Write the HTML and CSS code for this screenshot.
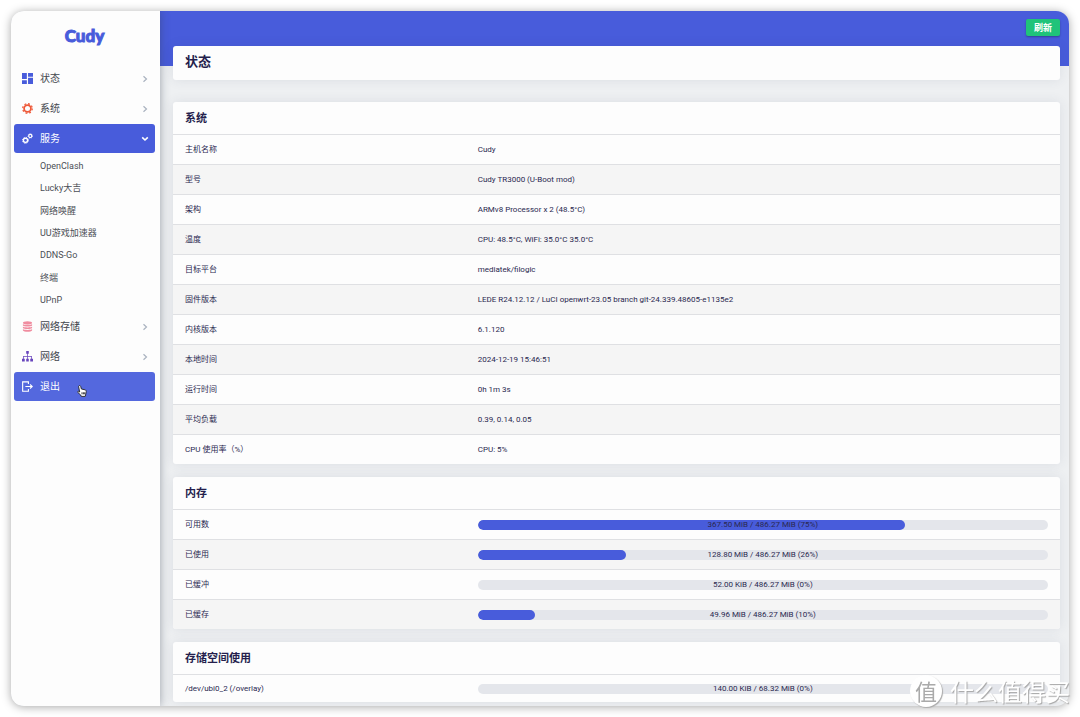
FILE: index.html
```html
<!DOCTYPE html>
<html lang="zh-CN">
<head>
<meta charset="utf-8">
<meta name="viewport" content="width=device-width, initial-scale=1">
<title>Cudy - 状态</title>
<link rel="stylesheet" href="styles.css">
</head>
<body>
<div class="window">
  <aside class="sidebar">
    <a class="brand" href="#">Cudy</a>
    <nav>
      <ul class="menu">
        <li><a class="menu-link" href="#">
          <svg class="icon blue" viewBox="0 0 12 12"><path d="M0 0h5.3v6.6H0zM6.6 0H12v4H6.600zM0 7.800h5.300V12H0zM6.600 5.300H12V12H6.600z"/></svg>
          <span>状态</span>
          <svg class="chevron" viewBox="0 0 8 8"><path d="M2.500 1.200 5.500 4 2.500 6.800"/></svg></a></li>
        <li><a class="menu-link" href="#">
          <svg class="icon red line" viewBox="0 0 12 12"><circle cx="6" cy="6" r="3.700" stroke-width="1.900"/><circle cx="6" cy="6" r="5.200" stroke-width="1.400" stroke-dasharray="2.040 2.040"/></svg>
          <span>系统</span>
          <svg class="chevron" viewBox="0 0 8 8"><path d="M2.500 1.200 5.500 4 2.500 6.800"/></svg></a></li>
        <li><a class="menu-link active" href="#">
          <svg class="icon line" viewBox="0 0 12 12"><circle cx="3.800" cy="8" r="2.300" stroke-width="1.500"/><circle cx="3.800" cy="8" r="3.300" stroke-width="1" stroke-dasharray="1.300 1.290"/><circle cx="9" cy="3.200" r="1.700" stroke-width="1.300"/><circle cx="9" cy="3.200" r="2.500" stroke-width=".8" stroke-dasharray=".98 .98"/></svg>
          <span>服务</span>
          <svg class="chevron" viewBox="0 0 8 8"><path d="M1.200 2.300 4 5 6.800 2.300"/></svg></a>
          <ul class="submenu">
            <li><a href="#">OpenClash</a></li>
            <li><a href="#">Lucky大吉</a></li>
            <li><a href="#">网络唤醒</a></li>
            <li><a href="#">UU游戏加速器</a></li>
            <li><a href="#">DDNS-Go</a></li>
            <li><a href="#">终端</a></li>
            <li><a href="#">UPnP</a></li>
          </ul></li>
        <li><a class="menu-link" href="#">
          <svg class="icon pink" viewBox="0 0 12 12"><ellipse cx="6" cy="2" rx="5" ry="1.700"/><path d="M1 3.200c1 1.300 9 1.300 10 0v1.700c-1 1.500-9 1.500-10 0zM1 6c1 1.300 9 1.300 10 0v1.700c-1 1.500-9 1.500-10 0zM1 8.800c1 1.300 9 1.300 10 0v1.500c-1 1.900-9 1.900-10 0z"/></svg>
          <span>网络存储</span>
          <svg class="chevron" viewBox="0 0 8 8"><path d="M2.500 1.200 5.500 4 2.500 6.800"/></svg></a></li>
        <li><a class="menu-link" href="#">
          <svg class="icon purple" viewBox="0 0 12 12"><path d="M4.600 0h2.800v3H6.400v2.400h4.400V8.500H12v3H9v-3h1V6.300H6.400v2.200h1v3H4.600v-3h1V6.300H2v2.200h1v3H0v-3h1.200V5.400h4.400V3h-1z"/></svg>
          <span>网络</span>
          <svg class="chevron" viewBox="0 0 8 8"><path d="M2.500 1.200 5.500 4 2.500 6.800"/></svg></a></li>
        <li><a class="menu-link hover" href="#">
          <svg class="icon line" viewBox="0 0 12 12"><path d="M7 3.200V.9H.7v10.300H7V8.800M3.700 6h7.500M8.800 3.800 11.200 6 8.800 8.200" stroke-width="1.200"/></svg>
          <span>退出</span>
          <svg class="cursor" viewBox="0 0 10 12"><path d="M2.200.7c.8-.5 1.300.1 1.500.8l.7 2.500 3.600.8c1 .3 1.400 1 1.200 2l-.6 3.200-.4 1.400H4.300L3.700 10 .9 7.500C.2 6.600 1.200 5.900 2 6.500l.7.500L1.600 1.700c-.1-.4.1-.8.600-1z"/><path d="M5 7.300v2M6.400 7.300v2M7.700 7.300v2"/></svg></a></li>
      </ul>
    </nav>
  </aside>

  <div class="main">
    <header class="topbar"><button class="refresh" type="button">刷新</button></header>
    <main class="content">
      <h1 class="card page-title">状态</h1>

      <section class="card">
        <h2>系统</h2>
        <table>
          <tr><th scope="row">主机名称</th><td>Cudy</td></tr>
          <tr><th scope="row">型号</th><td>Cudy TR3000 (U-Boot mod)</td></tr>
          <tr><th scope="row">架构</th><td>ARMv8 Processor x 2 (48.5°C)</td></tr>
          <tr><th scope="row">温度</th><td>CPU: 48.5°C, WiFi: 35.0°C 35.0°C</td></tr>
          <tr><th scope="row">目标平台</th><td>mediatek/filogic</td></tr>
          <tr><th scope="row">固件版本</th><td>LEDE R24.12.12 / LuCI openwrt-23.05 branch git-24.339.48605-e1135e2</td></tr>
          <tr><th scope="row">内核版本</th><td>6.1.120</td></tr>
          <tr><th scope="row">本地时间</th><td>2024-12-19 15:46:51</td></tr>
          <tr><th scope="row">运行时间</th><td>0h 1m 3s</td></tr>
          <tr><th scope="row">平均负载</th><td>0.39, 0.14, 0.05</td></tr>
          <tr><th scope="row">CPU 使用率（%）</th><td>CPU: 5%</td></tr>
        </table>
      </section>

      <section class="card">
        <h2>内存</h2>
        <table>
          <tr><th scope="row">可用数</th><td><div class="bar"><div class="fill" style="width:75%"></div><span>367.50 MiB / 486.27 MiB (75%)</span></div></td></tr>
          <tr><th scope="row">已使用</th><td><div class="bar"><div class="fill" style="width:26%"></div><span>128.80 MiB / 486.27 MiB (26%)</span></div></td></tr>
          <tr><th scope="row">已缓冲</th><td><div class="bar"><div class="fill" style="width:0%"></div><span>52.00 KiB / 486.27 MiB (0%)</span></div></td></tr>
          <tr><th scope="row">已缓存</th><td><div class="bar"><div class="fill" style="width:10%"></div><span>49.96 MiB / 486.27 MiB (10%)</span></div></td></tr>
        </table>
      </section>

      <section class="card">
        <h2>存储空间使用</h2>
        <table class="compact">
          <tr><th scope="row">/dev/ubi0_2 (/overlay)</th><td><div class="bar"><div class="fill" style="width:0%"></div><span>140.00 KiB / 68.32 MiB (0%)</span></div></td></tr>
        </table>
      </section>
    </main>
  </div>
</div>
<div class="watermark"><span class="seal">值</span><span>什么值得买</span></div>
</body>
</html>
```
FILE: styles.css
```css
* { box-sizing: border-box; }

body {
  margin: 0;
  padding: 11px;
  background: #fff;
  color: #2a2850;
  font: 8px/12px Roboto, "Noto Sans CJK SC", sans-serif;
}

ul { list-style: none; margin: 0; padding: 0; }
a { color: inherit; text-decoration: none; }

.window {
  display: flex;
  min-height: calc(100vh - 22px);
  border-radius: 13px;
  overflow: hidden;
  background: #eef0f2;
  box-shadow: 0 1px 10px rgba(0, 0, 0, .34);
}

/* Sidebar */
.sidebar {
  position: relative;
  z-index: 1;
  flex: 0 0 149px;
  background: #fdfdfd;
  box-shadow: 0 0 9px rgba(50, 60, 80, .45);
}

.brand {
  display: block;
  height: 53px;
  padding-top: 12px;
  padding-right: 2px;
  text-align: center;
  color: #485cdb;
  font: 900 17px/26px Lato, sans-serif;
  -webkit-text-stroke: 1px #485cdb;
  stroke-linejoin: round;
}

.menu {
  display: flex;
  flex-direction: column;
  gap: 1px;
  padding: 0 5px 0 3px;
}

.menu-link {
  position: relative;
  display: flex;
  align-items: center;
  height: 29px;
  padding: 0 6px 0 8px;
  border-radius: 3px;
  color: #43464d;
  font-size: 10px;
}
.menu-link span { flex: 1; padding-top: 1px; }
.menu-link.active { background: #485cdb; color: #fff; }
.menu-link.hover { background: #5468de; color: #fff; }

.icon { width: 11px; height: 11px; margin-right: 7px; fill: currentColor; }
.icon.line { fill: none; stroke: currentColor; }
.blue { color: #485cdb; }
.red { color: #ee5a3a; }
.pink { color: #f08da0; }
.purple { color: #6946bd; }

.chevron { width: 8px; height: 8px; fill: none; stroke: #a9b2bf; stroke-width: 1.2; }
.active .chevron { stroke: #fff; stroke-width: 1.6; }

.cursor {
  position: absolute;
  left: 63px;
  top: 13px;
  width: 10px;
  height: 12px;
  fill: #fff;
  stroke: #222;
  stroke-width: .9;
}

.submenu {
  display: grid;
  grid-auto-rows: 1fr;
  height: 158px;
  padding-top: 2px;
  font-size: 9px;
  color: #4b4e55;
}
.submenu a { display: flex; align-items: center; height: 100%; padding-left: 26px; }

/* Content */
.main { flex: 1; min-width: 0; }

.topbar {
  display: flex;
  justify-content: flex-end;
  align-items: flex-start;
  height: 55px;
  padding: 8px 9px;
  background: #485cdb;
}

.refresh {
  width: 34px;
  height: 17px;
  padding: 0;
  border: 0;
  border-radius: 2px;
  background: #20c37a;
  color: #fff;
  font: 700 9px/17px "Noto Sans CJK SC", sans-serif;
  box-shadow: 0 1px 2px rgba(0, 0, 0, .3);
}

.content { margin-top: -20px; padding: 0 9px 4px 13px; }

.card {
  margin: 0 0 13px;
  border-radius: 3px;
  overflow: hidden;
  background: #fdfdfd;
  box-shadow: 0 0 12px rgba(60, 65, 100, .1);
}
.card:last-child { margin-bottom: 0; }

.page-title {
  margin-bottom: 22px;
  padding: 0 12px 2px;
  font-size: 13px;
  line-height: 32px;
  color: #251f4d;
}

h2 {
  margin: 0;
  padding: 2px 12px 0;
  font-size: 11px;
  line-height: 30px;
  color: #251f4d;
}

table { width: 100%; table-layout: fixed; border-collapse: separate; border-spacing: 0; }
th, td {
  height: 30px;
  padding: 0 12px;
  border-top: 1px solid #dfe0e3;
  text-align: left;
  font-weight: 400;
}
th { width: 33%; }
tr:nth-child(even) { background: #f5f5f5; }
.compact th, .compact td { height: 28px; }

.bar {
  position: relative;
  height: 10px;
  border-radius: 5px;
  overflow: hidden;
  background: #e4e6eb;
  line-height: 10px;
  text-align: center;
}
.fill { height: 100%; border-radius: 5px; background: #485cdb; }
.bar span { position: absolute; inset: 0; }

.watermark {
  position: fixed;
  right: 10px;
  bottom: 9px;
  display: flex;
  align-items: center;
  gap: 8px;
  color: #fff;
  font: 400 24px/34px "Noto Sans CJK SC", sans-serif;
  text-shadow: 1px 1px 1px #a4a4a4;
}
.seal {
  width: 32px;
  height: 32px;
  border-radius: 50%;
  background: #fff;
  color: #aaa;
  font-size: 22px;
  line-height: 31px;
  text-align: center;
  text-shadow: none;
  box-shadow: 1px 1px 1px #aaa;
}
```
